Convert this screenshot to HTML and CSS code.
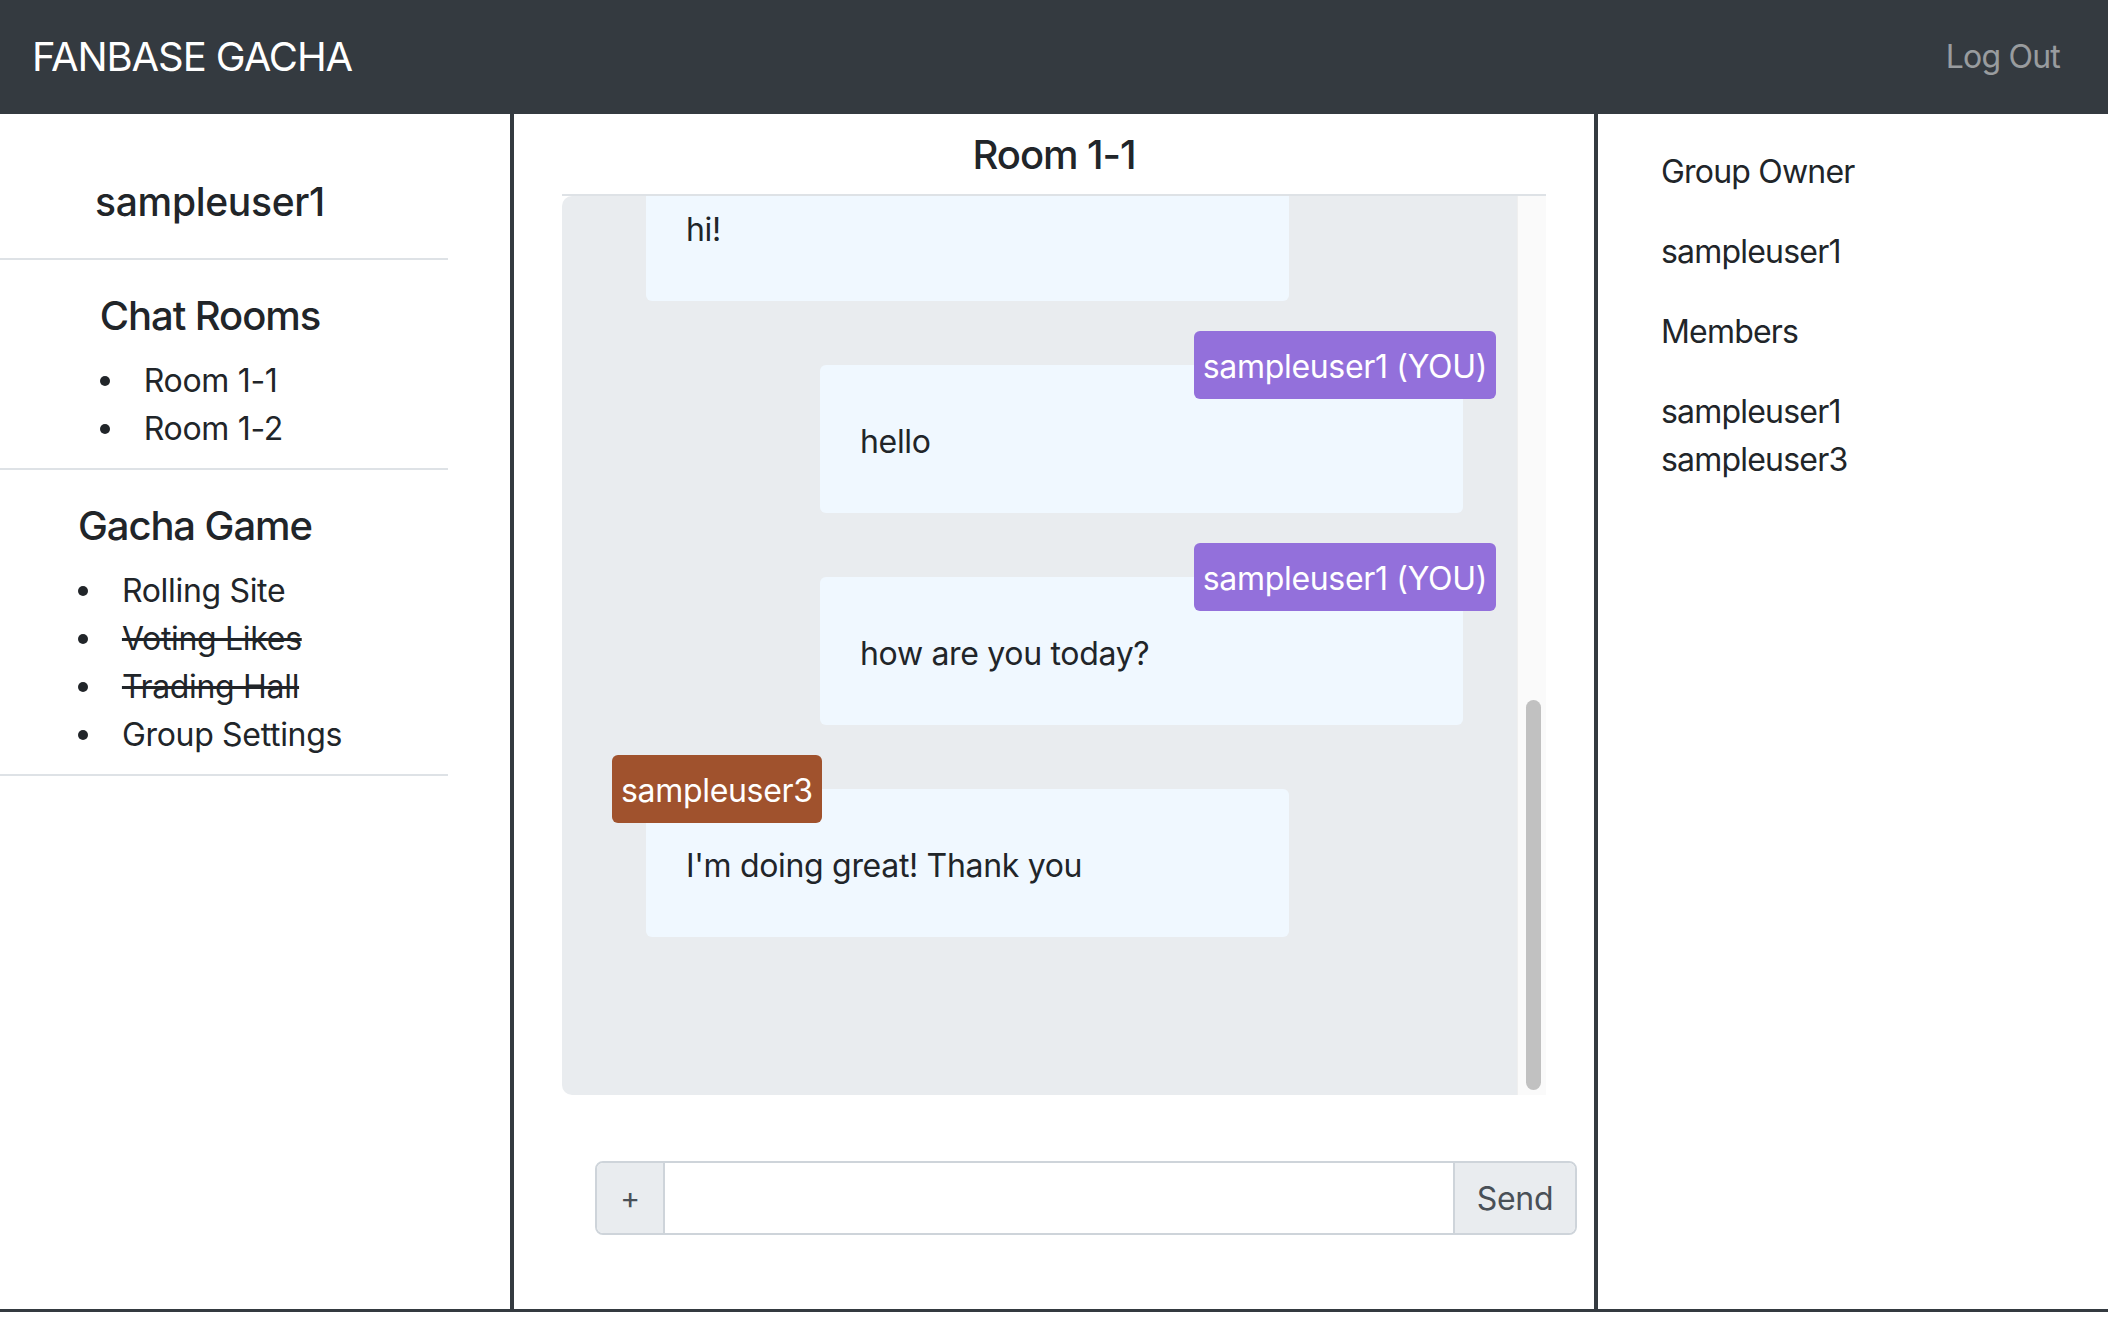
FILE: index.html
```html
<!DOCTYPE html>
<html lang="en">
<head>
<meta charset="utf-8">
<title>Fanbase Gacha - Room 1-1</title>
<link rel="stylesheet" href="styles.css">
</head>
<body>
<header class="navbar">
  <div class="brand">FANBASE GACHA</div>
  <a class="logout">Log Out</a>
</header>
<main class="layout">
  <aside class="sidebar">
    <section class="side-section profile">
      <h5 class="username">sampleuser1</h5>
    </section>
    <section class="side-section">
      <div class="side-block">
        <h5 class="side-title">Chat Rooms</h5>
        <ul class="side-list">
          <li>Room 1-1</li>
          <li>Room 1-2</li>
        </ul>
      </div>
    </section>
    <section class="side-section">
      <div class="side-block">
        <h5 class="side-title">Gacha Game</h5>
        <ul class="side-list">
          <li>Rolling Site</li>
          <li class="struck">Voting Likes</li>
          <li class="struck">Trading Hall</li>
          <li>Group Settings</li>
        </ul>
      </div>
    </section>
  </aside>

  <section class="chat">
    <h5 class="room-title">Room 1-1</h5>
    <div class="chat-frame">
      <div class="chat-scroll">
        <div class="thread">
          <div class="msg other">hi!</div>
          <div class="msg own"><span class="badge">sampleuser1 (YOU)</span>hello</div>
          <div class="msg own"><span class="badge">sampleuser1 (YOU)</span>how are you today?</div>
          <div class="msg other"><span class="badge">sampleuser3</span>I'm doing great! Thank you</div>
        </div>
      </div>
      <div class="scroll-track"><div class="scroll-thumb"></div></div>
    </div>
    <div class="composer">
      <div class="addon plus">+</div>
      <input class="msg-input" type="text">
      <div class="addon send">Send</div>
    </div>
  </section>

  <aside class="members">
    <p class="info">Group Owner</p>
    <p class="info">sampleuser1</p>
    <p class="info">Members</p>
    <p class="info">sampleuser1<br>sampleuser3</p>
  </aside>
</main>
</body>
</html>
```
FILE: styles.css
```css
* { box-sizing: border-box; }

body {
  margin: 0;
  font-family: Inter, "Noto Sans", "Liberation Sans", sans-serif;
  letter-spacing: -0.02em;
  color: #212529;
  background: #fff;
}

.navbar {
  height: 114px;
  background: #343a40;
  display: flex;
  align-items: center;
  justify-content: space-between;
  padding: 0 48px 0 32px;
}
.brand {
  font-size: 40px;
  line-height: 48px;
  letter-spacing: -0.027em;
  color: #fff;
}
.logout {
  font-size: 32px;
  line-height: 48px;
  letter-spacing: -0.025em;
  color: rgba(255, 255, 255, 0.5);
}

.layout {
  display: flex;
  height: 1198px;
  border-bottom: 3px solid #343a40;
}

/* left sidebar */
.sidebar {
  width: 510px;
  flex: none;
}
.side-section {
  width: 448px;
  border-bottom: 2px solid #dee2e6;
  padding: 32px 28px 15px 0;
  text-align: center;
}
.side-section.profile {
  padding: 64px 28px 32px 0;
}
h5 { margin: 0; }
.username {
  font-size: 39px;
  font-weight: 500;
  line-height: 48px;
}
.side-block {
  display: inline-block;
  text-align: left;
}
.side-title {
  font-size: 40px;
  font-weight: 500;
  line-height: 48px;
  letter-spacing: -0.027em;
  margin-bottom: 17px;
}
.side-list {
  list-style: none;
  margin: 0;
  padding: 0;
}
.side-list li {
  font-size: 32px;
  line-height: 48px;
  display: flex;
  align-items: center;
}
.side-list li::before {
  content: "";
  flex: none;
  width: 10px;
  height: 10px;
  border-radius: 50%;
  background: #212529;
  margin-right: 34px;
}
.side-list li.struck {
  text-decoration: line-through;
}

/* chat column */
.chat {
  width: 1088px;
  flex: none;
  border-left: 4px solid #343a40;
  border-right: 4px solid #343a40;
  padding-top: 17px;
}
.room-title {
  font-size: 40px;
  font-weight: 500;
  line-height: 48px;
  letter-spacing: -0.027em;
  text-align: center;
}
.chat-frame {
  display: flex;
  margin: 15px 0 0 48px;
  width: 984px;
  height: 901px;
  border-top: 2px solid #dee2e6;
}
.chat-scroll {
  flex: 1;
  overflow: hidden;
  background: #e9ecef;
  border-radius: 10px 0 0 10px;
  display: flex;
  flex-direction: column-reverse;
}
.scroll-track {
  flex: none;
  width: 29px;
  display: flex;
  flex-direction: column;
  justify-content: flex-end;
  background: #fafafa;
  border-left: 1px solid #efefef;
}
.scroll-thumb {
  height: 390px;
  margin: 0 5px 5px 8px;
  border-radius: 8px;
  background: #c1c1c1;
}
.thread {
  flex: none;
  display: flex;
  flex-direction: column;
  padding-bottom: 158px;
}
.msg {
  position: relative;
  flex: none;
  width: 643px;
  margin-top: 64px;
  padding: 53px 40px 47px;
  background: #f0f8ff;
  border-radius: 6px;
  font-size: 32px;
  line-height: 48px;
}
.msg.other {
  margin-left: 84px;
}
.msg.own {
  align-self: flex-end;
  margin-right: 54px;
}
.badge {
  position: absolute;
  top: -34px;
  padding: 12px 9px 8px;
  border-radius: 6px;
  color: #fff;
  font-size: 32px;
  line-height: 48px;
  white-space: nowrap;
}
.other .badge {
  left: -34px;
  background: #a0522d;
}
.own .badge {
  right: -33px;
  background: #9370db;
}

.composer {
  display: flex;
  width: 982px;
  height: 74px;
  margin: 66px 0 0 81px;
  border: 2px solid #ced4da;
  border-radius: 8px;
  overflow: hidden;
}
.addon {
  flex: none;
  display: flex;
  align-items: center;
  justify-content: center;
  background: #e9ecef;
  color: #495057;
  font-size: 32px;
}
.plus {
  width: 68px;
  font-size: 30px;
  border-right: 2px solid #ced4da;
}
.send {
  width: 122px;
  border-left: 2px solid #ced4da;
}
.msg-input {
  flex: 1;
  min-width: 0;
  border: 0;
  padding: 0 24px;
  margin: 0;
  font: inherit;
  font-size: 32px;
  background: #fff;
  outline: none;
}

/* right column */
.members {
  flex: 1;
  padding: 34px 0 0 63px;
}
.info {
  margin: 0 0 32px;
  font-size: 32px;
  line-height: 48px;
  letter-spacing: -0.025em;
}
```
